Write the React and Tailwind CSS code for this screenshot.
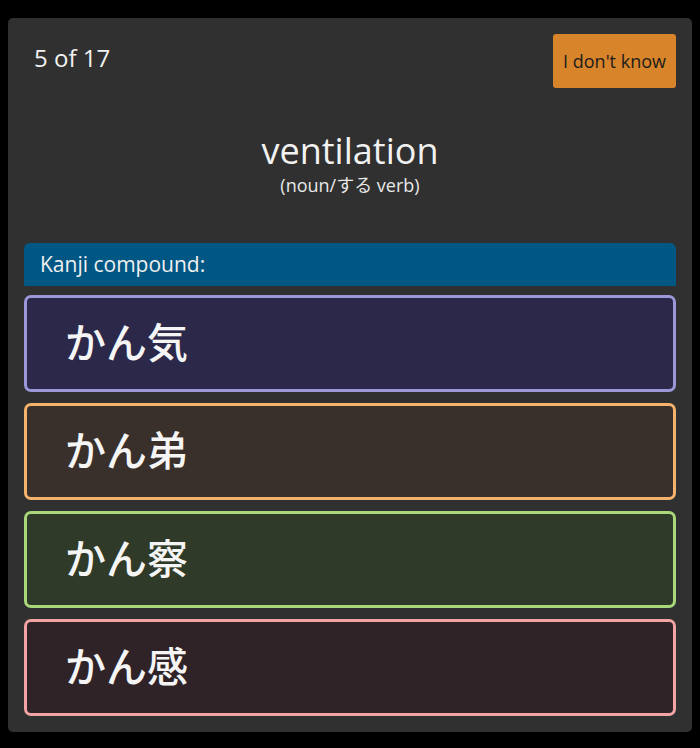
export default function App() {
  const options = [
    { text: "かん気", bg: "bg-[#2b284a]", border: "border-[#9b97d8]" },
    { text: "かん弟", bg: "bg-[#3a302b]", border: "border-[#f5b26c]" },
    { text: "かん察", bg: "bg-[#2f3a28]", border: "border-[#a9d77a]" },
    { text: "かん感", bg: "bg-[#2f2328]", border: "border-[#f2a4a4]" },
  ];
  return (
    <div
      className="min-h-[748px] bg-black pt-[18px] pl-[8px] pr-[8px] pb-[16px]"
      style={{ fontFamily: '"Open Sans", "Noto Sans CJK JP", sans-serif' }}
    >
      <div className="bg-[#2f302f] rounded-[5px] h-[714px] px-4 pt-4 flex flex-col">
        <div className="flex items-start justify-between h-[54px]">
          <div className="text-[24px] text-[#f2f2f2] pl-[10px] pt-[7px] leading-[34px]">5 of 17</div>
          <button className="bg-[#d8842a] rounded-[3px] w-[123px] h-[54px] text-[18px] text-[#1c1c1c] flex items-center justify-center">
            I don't know
          </button>
        </div>
        <div className="flex flex-col items-center mt-[42px]">
          <div className="text-[36px] leading-[42px] text-[#f2f2f2]">ventilation</div>
          <div className="text-[18px] leading-[22px] text-[#e8e8e8] mt-[2px]">(noun/する verb)</div>
        </div>
        <div className="mt-[47px] bg-[#005784] rounded-t-[6px] h-[43px] flex items-center px-4 text-[21px] text-[#f0f0f0]">
          Kanji compound:
        </div>
        <div className="flex flex-col gap-[11px] mt-[9px]">
          {options.map((o) => (
            <div
              key={o.text}
              className={`h-[97px] rounded-[7px] border-[3px] ${o.border} ${o.bg} flex items-center pl-[38px] pb-[6px] text-[41px] font-medium text-[#f5f5f5]`}
              style={{ fontFamily: '"Noto Sans CJK JP", sans-serif' }}
            >
              {o.text}
            </div>
          ))}
        </div>
      </div>
    </div>
  );
}
